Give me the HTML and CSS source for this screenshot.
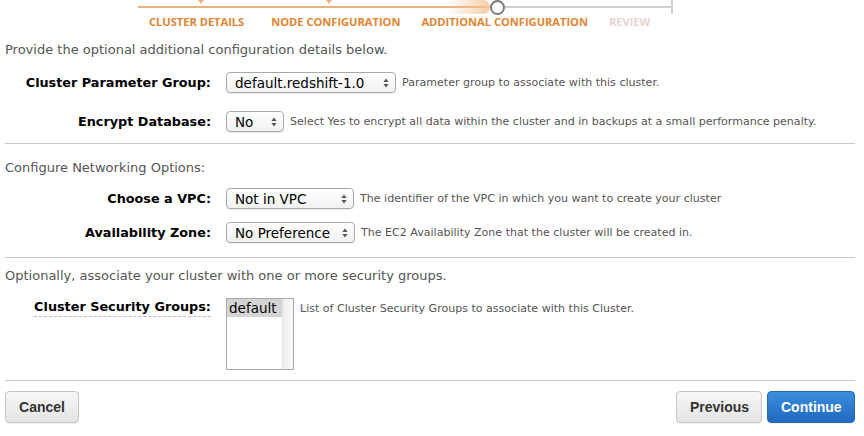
FILE: index.html
```html
<!DOCTYPE html>
<html>
<head>
<meta charset="utf-8">
<link rel="stylesheet" href="styles.css">
</head>
<body>
<div class="page">
  <div class="stepper">
    <span class="mark mark-1"></span>
    <span class="mark mark-2"></span>
    <div class="track">
      <span class="done-line"></span>
      <span class="glow"></span>
      <span class="dot"></span>
      <span class="todo-line"></span>
      <span class="tick"></span>
    </div>
    <div class="steps">
      <span class="step s1">CLUSTER DETAILS</span>
      <span class="step s2">NODE CONFIGURATION</span>
      <span class="step s3">ADDITIONAL CONFIGURATION</span>
      <span class="step s4 future">REVIEW</span>
    </div>
  </div>

  <p class="intro">Provide the optional additional configuration details below.</p>

  <div class="row r1">
    <label class="lbl">Cluster Parameter Group:</label>
    <div class="select w-param"><span class="val">default.redshift-1.0</span><svg class="arr" width="6" height="10" viewBox="0 0 6 10"><path d="M3 0.5L5.6 4H0.4Z M3 9.5L5.6 6H0.4Z" fill="#555"/></svg></div>
    <span class="help">Parameter group to associate with this cluster.</span>
  </div>

  <div class="row r2">
    <label class="lbl">Encrypt Database:</label>
    <div class="select w-enc"><span class="val">No</span><svg class="arr" width="6" height="10" viewBox="0 0 6 10"><path d="M3 0.5L5.6 4H0.4Z M3 9.5L5.6 6H0.4Z" fill="#555"/></svg></div>
    <span class="help">Select Yes to encrypt all data within the cluster and in backups at a small performance penalty.</span>
  </div>

  <hr class="sep sep1">

  <p class="section">Configure Networking Options:</p>

  <div class="row r3">
    <label class="lbl">Choose a VPC:</label>
    <div class="select w-vpc"><span class="val">Not in VPC</span><svg class="arr" width="6" height="10" viewBox="0 0 6 10"><path d="M3 0.5L5.6 4H0.4Z M3 9.5L5.6 6H0.4Z" fill="#555"/></svg></div>
    <span class="help">The identifier of the VPC in which you want to create your cluster</span>
  </div>

  <div class="row r4">
    <label class="lbl">Availability Zone:</label>
    <div class="select w-az"><span class="val">No Preference</span><svg class="arr" width="6" height="10" viewBox="0 0 6 10"><path d="M3 0.5L5.6 4H0.4Z M3 9.5L5.6 6H0.4Z" fill="#555"/></svg></div>
    <span class="help">The EC2 Availability Zone that the cluster will be created in.</span>
  </div>

  <hr class="sep sep2">

  <p class="section s-opt">Optionally, associate your cluster with one or more security groups.</p>

  <div class="row r5">
    <div class="lbl"><span class="dashed">Cluster Security Groups:</span></div>
    <div class="listbox">
      <div class="items"><div class="item sel">default</div></div>
      <div class="scroll"></div>
    </div>
    <span class="help help-top">List of Cluster Security Groups to associate with this Cluster.</span>
  </div>

  <hr class="sep sep3">

  <div class="actions">
    <button class="btn btn-cancel">Cancel</button>
    <div class="right">
      <button class="btn btn-prev">Previous</button>
      <button class="btn primary">Continue</button>
    </div>
  </div>
</div>
</body>
</html>
```

FILE: styles.css
```css
* { box-sizing: border-box; }
html, body { margin: 0; padding: 0; background: #fff; }
body { font-family: "DejaVu Sans", Verdana, sans-serif; color: #000; width: 864px; height: 436px; overflow: hidden; }
.page { padding: 0 9px 0 5px; }

.stepper { position: relative; height: 29px; }
.track { display: flex; align-items: center; height: 14px; margin-left: 133px; position: relative; }
.done-line { width: 352px; height: 2px; background: #e9b37e; }
.glow { position: absolute; left: 310px; top: 0; width: 42px; height: 14px; background: linear-gradient(90deg, rgba(247,210,170,0) 0%, rgba(245,195,150,0.85) 100%); border-radius: 0 7px 7px 0; }
.dot { width: 15px; height: 15px; border: 2px solid #7b7b7b; border-radius: 50%; background: #fff; position: relative; z-index: 1; margin-top: 1px; }
.todo-line { width: 166px; height: 2px; background: #d0d0d0; }
.tick { width: 2px; height: 14px; background: #d0d0d0; }
.mark { position: absolute; top: 0; width: 6px; height: 4px; background: #eab37e; clip-path: polygon(0 0, 100% 0, 50% 100%); }
.mark-1 { left: 193px; }
.mark-2 { left: 321px; }

.steps { display: flex; margin-top: 1px; font-family: "Open Sans", sans-serif; font-weight: 700; font-size: 11.1px; line-height: 14px; color: #e38430; }
.s1 { margin-left: 144px; }
.s2 { margin-left: 27px; }
.s3 { margin-left: 21px; }
.s4 { margin-left: 21px; }
.future { color: #ebd2d0; }

.intro, .section { margin: 0; font-size: 13px; line-height: 16px; color: #555; }
.intro { margin-top: 13px; }
.section { margin-top: 16px; }
.s-opt { margin-top: 10px; }

.row { display: flex; align-items: center; }
.lbl { width: 206px; text-align: right; font-weight: 700; font-size: 12.8px; margin-right: 15px; flex: none; }
.r1 { margin-top: 14px; }
.r2 { margin-top: 18px; }
.r3 { margin-top: 12px; }
.r4 { margin-top: 13px; }
.r5 { margin-top: 14px; align-items: flex-start; }
.r5 .lbl { padding-top: 1px; }
.dashed { border-bottom: 1px dashed #bbb; padding-bottom: 2px; }

.select { display: flex; align-items: center; justify-content: space-between; height: 21px; padding: 0 6px 0 8px; border: 1px solid #a9a9a9; border-radius: 4px; background: linear-gradient(#ffffff, #f1f1f1); box-shadow: 0 1px 1px rgba(0,0,0,0.08); font-size: 13.5px; color: #000; flex: none; }
.arr { flex: none; }
.w-param { width: 170px; }
.w-enc { width: 58px; }
.w-vpc { width: 128px; }
.w-az { width: 129px; }
.help { margin-left: 6px; font-size: 11.05px; color: #555; white-space: nowrap; }
.help-top { margin-top: 4px; }

.listbox { display: flex; width: 68px; height: 72px; border: 1px solid #a9a9a9; flex: none; }
.items { flex: 1; }
.item { font-size: 13.5px; line-height: 18px; padding-left: 2px; }
.item.sel { background: #d4d4d4; }
.scroll { width: 11px; background: linear-gradient(90deg, #eeeeee, #f8f8f8); border-left: 1px solid #e3e3e3; }

.sep { border: 0; height: 1px; background: #c8c8c8; margin: 0; }
.sep1 { margin-top: 11px; }
.sep2 { margin-top: 14px; }
.sep3 { margin-top: 10px; }

.actions { display: flex; justify-content: space-between; margin-top: 10px; }
.right { display: flex; gap: 5px; }
.btn { height: 32px; padding: 0 13px; border: 1px solid #c5c5c5; border-radius: 4px; background: linear-gradient(#f7f7f7, #e4e4e4); font-family: "Liberation Sans", Arial, sans-serif; font-weight: 700; font-size: 14px; color: #333; box-shadow: 0 1px 1px rgba(0,0,0,0.06); }
.btn-cancel { width: 74px; }
.btn-prev { width: 86px; }
.primary { width: 88px; color: #fff; border-color: #2a68b0; background: linear-gradient(#3d8ddc, #1f6ac0); }
```
